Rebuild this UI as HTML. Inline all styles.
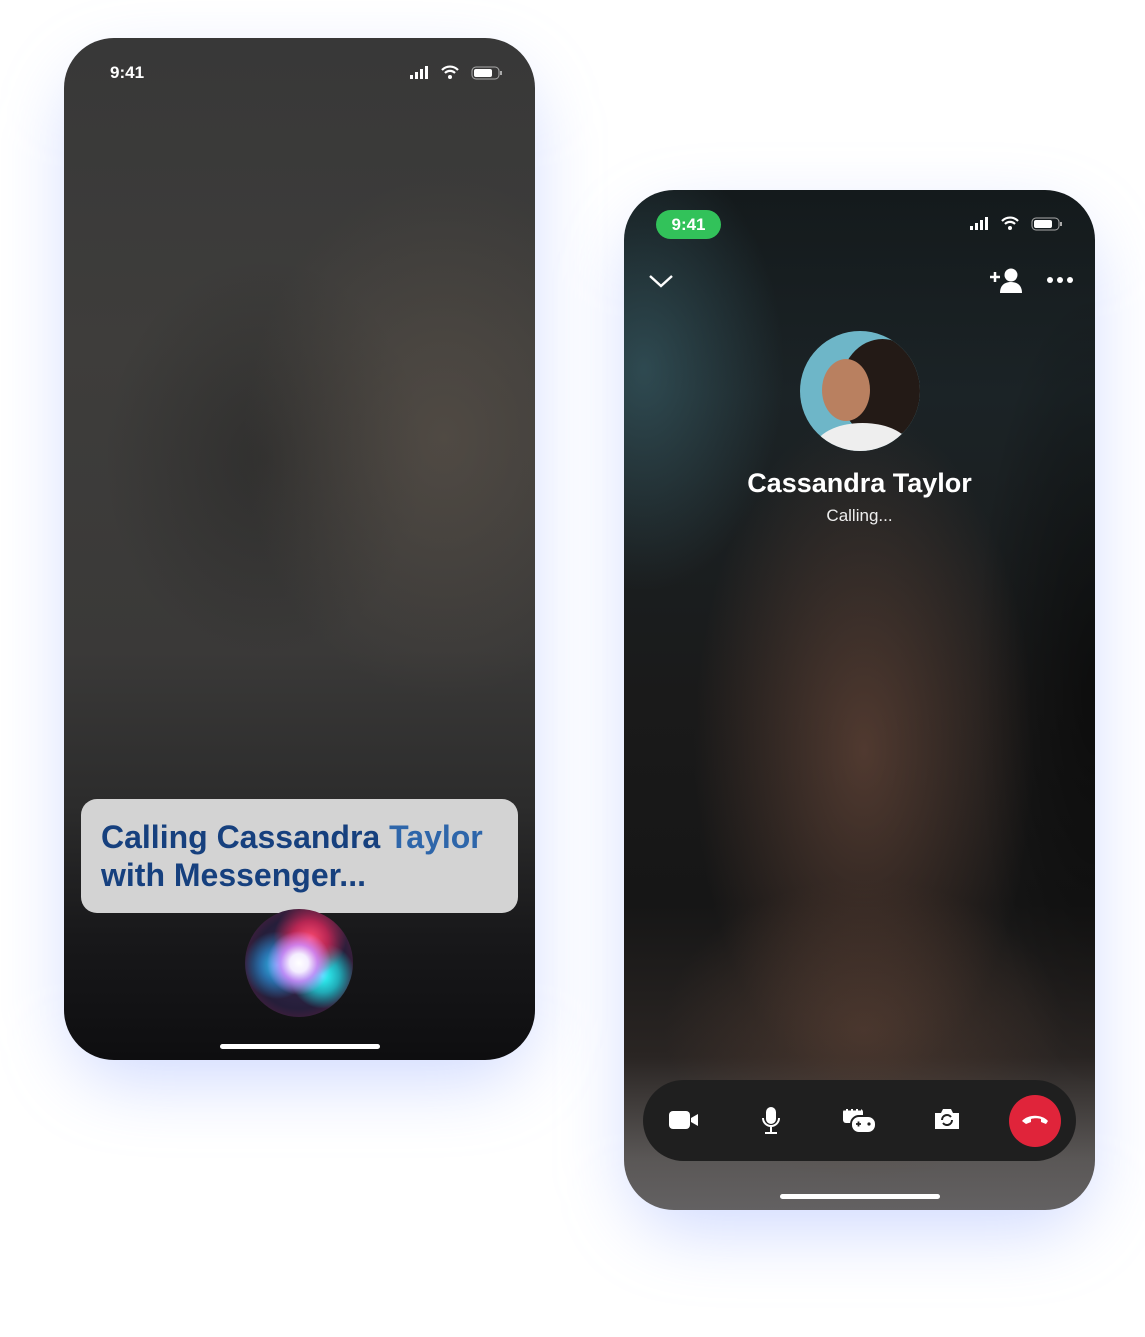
<!DOCTYPE html>
<html><head><meta charset="utf-8"><style>
html,body{margin:0;padding:0;background:#fff;width:1145px;height:1337px;overflow:hidden;position:relative;font-family:"Liberation Sans",sans-serif}
.glow{position:absolute;border-radius:60px;background:rgba(120,150,255,.35);filter:blur(35px)}
.ph{position:absolute;border-radius:50px;overflow:hidden}
#p1{left:64px;top:38px;width:471px;height:1022px;
background:
radial-gradient(ellipse 200px 260px at 380px 400px,rgba(95,85,75,.55),transparent),
radial-gradient(ellipse 160px 200px at 200px 420px,rgba(30,30,30,.4),transparent),
linear-gradient(180deg,#383838 0%,#3e3d3b 30%,#3a3938 60%,#2c2c2c 75%,#18181a 88%,#0e0e10 100%)}
#p2{left:624px;top:190px;width:471px;height:1020px;
background:
radial-gradient(ellipse 140px 220px at 20px 180px,rgba(60,100,110,.6),transparent),
radial-gradient(ellipse 170px 340px at 240px 560px,rgba(110,75,60,.65),transparent),
radial-gradient(ellipse 200px 150px at 240px 840px,rgba(100,70,55,.5),transparent),
radial-gradient(ellipse 120px 400px at 471px 500px,rgba(0,0,0,.5),transparent),
linear-gradient(180deg,#141a1c 0%,#1b2326 20%,#1a1a1a 50%,#161616 70%,#2a2523 85%,#5a5756 95%,#636162 100%)}
.st{position:absolute;color:#fff;font-size:17px;font-weight:bold}
.home{position:absolute;width:160px;height:5px;background:#fff;border-radius:3px}
</style></head><body>
<div class="glow" style="left:70px;top:70px;width:460px;height:1010px"></div>
<div class="glow" style="left:630px;top:220px;width:460px;height:1010px"></div>

<div class="ph" id="p1">
 <div class="st" style="left:46px;top:25px">9:41</div>
 <svg style="position:absolute;left:345px;top:27px" width="95" height="16" viewBox="0 0 95 16">
  <rect x="1" y="10" width="3" height="4" fill="#fff"/><rect x="6" y="7" width="3" height="7" fill="#fff"/><rect x="11" y="4" width="3" height="10" fill="#fff"/><rect x="16" y="1" width="3" height="13" fill="#fff"/>
  <path d="M33 5a11 11 0 0 1 16 0M36 8a7 7 0 0 1 10 0" stroke="#fff" stroke-width="2.2" fill="none"/><circle cx="41" cy="12" r="2" fill="#fff"/>
  <rect x="63" y="2" width="27" height="12" rx="4" stroke="#aaa" fill="none"/><rect x="65" y="4" width="18" height="8" rx="2" fill="#fff"/><rect x="91" y="6" width="2" height="4" fill="#aaa"/>
 </svg>
 <div style="position:absolute;left:17px;top:761px;width:437px;height:114px;background:#d3d3d3;border-radius:16px"></div>
 <div style="position:absolute;left:37px;top:780px;font-size:32px;line-height:38px;color:#16407e;font-weight:bold">Calling Cassandra <span style="color:#2e66aa">Taylor</span><br>with Messenger...</div>
 <div style="position:absolute;left:181px;top:871px;width:108px;height:108px;border-radius:50%;
 background:radial-gradient(circle at 50% 50%,#fff 0,#f4eeff 12%,rgba(210,140,255,.85) 24%,transparent 42%),
 radial-gradient(circle at 60% 28%,#ff4a70 0,rgba(230,40,90,.75) 18%,transparent 36%),
 radial-gradient(circle at 72% 62%,#30ffff 0,rgba(30,230,235,.7) 16%,transparent 32%),
 radial-gradient(circle at 30% 52%,#30c0f0 0,rgba(40,150,225,.65) 18%,transparent 36%),
 radial-gradient(circle,#3a2a50 0,#251e3a 60%,#6a2040 100%)"></div>
 <div class="home" style="left:156px;top:1006px"></div>
</div>

<div class="ph" id="p2">
 <div style="position:absolute;left:32px;top:20px;width:65px;height:29px;background:#32c25a;border-radius:15px;color:#fff;font-size:17px;font-weight:bold;text-align:center;line-height:29px">9:41</div>
 <svg style="position:absolute;left:345px;top:26px" width="95" height="16" viewBox="0 0 95 16">
  <rect x="1" y="10" width="3" height="4" fill="#fff"/><rect x="6" y="7" width="3" height="7" fill="#fff"/><rect x="11" y="4" width="3" height="10" fill="#fff"/><rect x="16" y="1" width="3" height="13" fill="#fff"/>
  <path d="M33 5a11 11 0 0 1 16 0M36 8a7 7 0 0 1 10 0" stroke="#fff" stroke-width="2.2" fill="none"/><circle cx="41" cy="12" r="2" fill="#fff"/>
  <rect x="63" y="2" width="27" height="12" rx="4" stroke="#aaa" fill="none"/><rect x="65" y="4" width="18" height="8" rx="2" fill="#fff"/><rect x="91" y="6" width="2" height="4" fill="#aaa"/>
 </svg>
 <svg style="position:absolute;left:24px;top:82px" width="26" height="18"><path d="M2 4l11 10L24 4" stroke="#fff" stroke-width="2.4" fill="none"/></svg>
 <svg style="position:absolute;left:364px;top:76px" width="38" height="28"><path d="M2 11h10M7 6v10" stroke="#fff" stroke-width="2.5"/><circle cx="23" cy="9" r="6.5" fill="#fff"/><path d="M12 27c0-8 5-11 11-11s11 3 11 11z" fill="#fff"/></svg>
 <svg style="position:absolute;left:422px;top:86px" width="28" height="8"><circle cx="4" cy="4" r="3" fill="#fff"/><circle cx="14" cy="4" r="3" fill="#fff"/><circle cx="24" cy="4" r="3" fill="#fff"/></svg>
 <div style="position:absolute;left:176px;top:141px;width:120px;height:120px;border-radius:50%;overflow:hidden;background:#6eb6c8">
  <div style="position:absolute;left:40px;top:8px;width:85px;height:100px;border-radius:50%;background:#231a16"></div>
  <div style="position:absolute;left:22px;top:28px;width:48px;height:62px;border-radius:50%;background:#b98060"></div>
  <div style="position:absolute;left:15px;top:92px;width:95px;height:50px;border-radius:50%;background:#eee"></div>
 </div>
 <div style="position:absolute;left:0;width:471px;top:278px;text-align:center;color:#fff;font-size:27px;font-weight:bold">Cassandra Taylor</div>
 <div style="position:absolute;left:0;width:471px;top:316px;text-align:center;color:#eee;font-size:17px">Calling...</div>
 <div style="position:absolute;left:19px;top:890px;width:433px;height:81px;border-radius:41px;background:#1f1f1f"></div>
 <svg style="position:absolute;left:44px;top:918px" width="32" height="24"><rect x="1" y="3" width="21" height="18" rx="4" fill="#fff"/><path d="M23 10l7-4v12l-7-4z" fill="#fff"/></svg>
 <svg style="position:absolute;left:136px;top:915px" width="22" height="30"><rect x="6" y="2" width="10" height="17" rx="5" fill="#fff"/><path d="M3 13a8 8 0 0 0 16 0M11 21v6M5 28h12" stroke="#fff" stroke-width="2" fill="none"/></svg>
 <svg style="position:absolute;left:218px;top:914px" width="36" height="32"><rect x="1" y="5" width="20" height="14" rx="3" fill="#fff"/><path d="M1 5h20" stroke="#1f1f1f" stroke-width="3" stroke-dasharray="3 2"/><rect x="9" y="12" width="25" height="17" rx="8" fill="#fff" stroke="#1f1f1f" stroke-width="2"/><path d="M14 20h5M16.5 17.5v5" stroke="#1f1f1f" stroke-width="1.8"/><circle cx="27" cy="20" r="1.6" fill="#1f1f1f"/></svg>
 <svg style="position:absolute;left:309px;top:916px" width="28" height="26"><path d="M2 7h6l2-4h8l2 4h6v16H2z" fill="#fff"/><path d="M9 14a5 5 0 0 1 9-3M19 14a5 5 0 0 1-9 3" stroke="#1f1f1f" stroke-width="2" fill="none"/></svg>
 <div style="position:absolute;left:385px;top:905px;width:52px;height:52px;border-radius:50%;background:#e0243a"></div>
 <svg style="position:absolute;left:396px;top:922px" width="30" height="14"><path d="M2 9c6-7 20-7 26 0l-2 3-5-2v-3c-3-1-7-1-10 0v3l-5 2z" fill="#fff"/></svg>
 <div class="home" style="left:156px;top:1004px"></div>
</div>
</body></html>
